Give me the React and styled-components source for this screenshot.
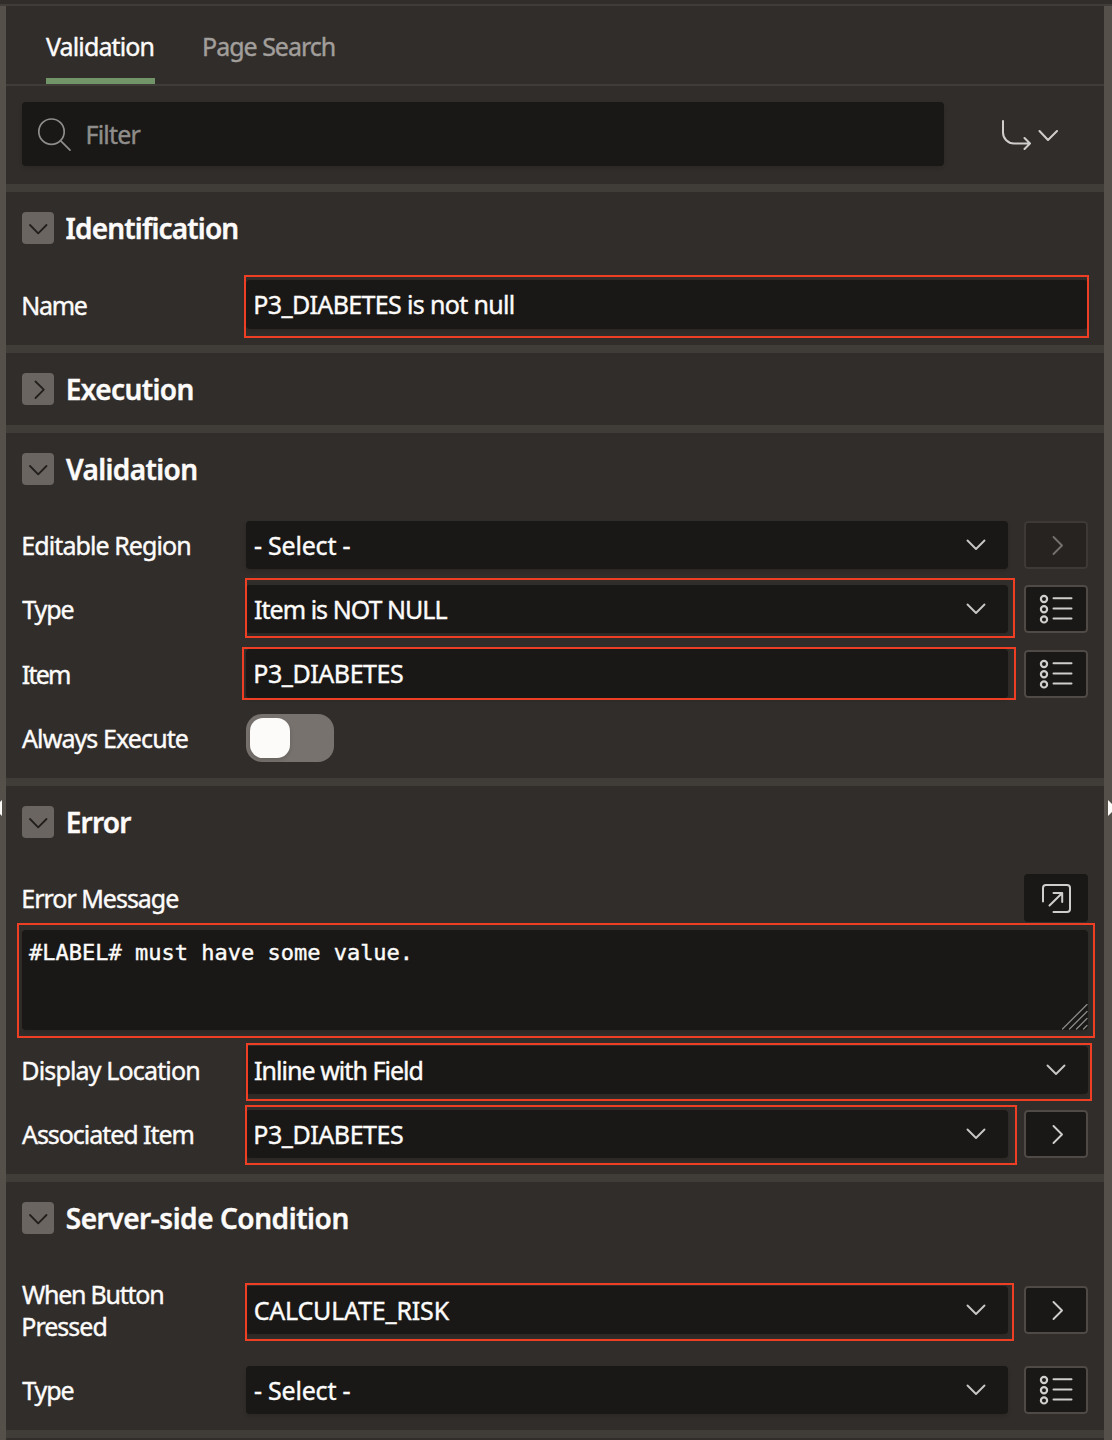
import React from 'react';
import styled, { createGlobalStyle } from 'styled-components';

const Global = createGlobalStyle`
  *, *::before, *::after { box-sizing: border-box; }
  body { margin: 0; background: #312d2a; }
`;

const SANS = '"Noto Sans", "Open Sans", sans-serif';
const RED = '#ee3f24';

/* ---------- frame ---------- */
const Shell = styled.div`
  height: 1440px;
  overflow: hidden;
  display: flex;
  flex-direction: column;
  background: #312d2a;
  color: #fcfbfa;
  font: 400 25px/32px ${SANS};
  font-variant-ligatures: none;
  -webkit-text-stroke: 0.4px currentColor;
`;
const TopEdge = styled.div`
  flex: none;
  height: 6px;
  border-bottom: 2px solid #403c38;
`;
const Columns = styled.div`
  flex: 1;
  display: flex;
  min-height: 0;
`;
const Splitter = styled.div`
  flex: none;
  position: relative;
  width: ${(p) => p.$width}px;
  background: #56504b;
`;
const LeftHandle = styled.i`
  position: absolute;
  top: 794px;
  left: -6px;
  border: solid transparent;
  border-width: 8px 8px 8px 0;
  border-right-color: #fcfbfa;
`;
const RightHandle = styled.i`
  position: absolute;
  top: 794px;
  left: 4px;
  border: solid transparent;
  border-width: 8px 0 8px 8px;
  border-left-color: #fcfbfa;
`;
const Panel = styled.main`
  flex: 1;
  min-width: 0;
  display: flex;
  flex-direction: column;
`;

/* ---------- text ---------- */
const Txt = styled.span`
  display: block;
  white-space: nowrap;
  letter-spacing: ${(p) => p.$track || 0}px;
  margin-left: ${(p) => p.$shift || 0}px;
`;

/* ---------- tabs and filter ---------- */
const Tabs = styled.nav`
  flex: none;
  display: flex;
  gap: 47px;
  height: 80px;
  padding-left: 40px;
  border-bottom: 2px solid #403c38;
`;
const Tab = styled.div`
  height: 78px;
  padding-top: 24px;
  width: ${(p) => p.$width}px;
  color: ${(p) => (p.$active ? '#fcfbfa' : '#a19e9b')};
  border-bottom: 6px solid ${(p) => (p.$active ? '#719468' : 'transparent')};
`;
const FilterBar = styled.div`
  flex: none;
  display: flex;
  height: 98px;
  padding: 16px 16px 18px;
`;
const FilterBox = styled.div`
  width: 922px;
  display: flex;
  align-items: center;
  gap: 14px;
  padding: 0 0 0 14px;
  border-radius: 4px;
  background: #191816;
  color: #8f8d8b;
  box-shadow: 0 2px 4px rgba(0, 0, 0, 0.12);
`;
const GoTo = styled.div`
  flex: 1;
  display: flex;
  justify-content: center;
  align-items: center;
  padding-left: 28px;
  color: #d0cecc;
`;

/* ---------- sections ---------- */
const Section = styled.section`
  flex: none;
  border-top: 8px solid #403c37;
`;
const Head = styled.header`
  display: flex;
  align-items: center;
  gap: 12px;
  height: 72px;
  padding: 0 16px;
`;
const Fold = styled.span`
  flex: none;
  display: flex;
  width: 32px;
  height: 32px;
  border-radius: 4px;
  background: #6a6561;
  color: #211e1c;
`;
const Title = styled.h2`
  margin: 0;
  font: 600 28px/32px ${SANS};
`;
const Body = styled.div`
  padding: 8px 16px;
`;
const Row = styled.div`
  display: flex;
  align-items: center;
  height: ${(p) => p.$h || 64}px;
`;
const Label = styled.div`
  flex: none;
  width: 224px;
`;
const Field = styled.div`
  position: relative;
  flex: 1;
  display: flex;
  align-items: center;
  justify-content: space-between;
  height: ${(p) => p.$h || 48}px;
  padding: 0 19px ${(p) => (p.$h ? 1 : 0)}px 8px;
  border-radius: 4px;
  background: #191816;
  box-shadow: 0 2px 4px rgba(0, 0, 0, 0.14);
`;
const Mark = styled.span`
  position: absolute;
  z-index: 1;
  top: ${(p) => p.$at[0]}px;
  right: ${(p) => p.$at[1]}px;
  bottom: ${(p) => p.$at[2]}px;
  left: ${(p) => p.$at[3]}px;
  border: 2px solid ${RED};
  pointer-events: none;
`;
const IconButton = styled.span`
  flex: none;
  display: flex;
  width: 64px;
  height: 48px;
  margin-left: ${(p) => (p.$push ? 'auto' : '16px')};
  margin-top: ${(p) => p.$drop || 0}px;
  border-radius: 4px;
  background: ${(p) => (p.$dim ? '#272320' : '#191816')};
  color: ${(p) => (p.$dim ? '#75716e' : '#d0cecc')};
  box-shadow: ${(p) =>
    p.$plain ? 'none' : `inset 0 0 0 2px ${p.$dim ? '#3e3936' : '#504a46'}`};
`;
const Toggle = styled.span`
  display: flex;
  width: 88px;
  height: 48px;
  padding: 4px;
  border-radius: 16px;
  background: #77726e;
`;
const Knob = styled.span`
  width: 40px;
  height: 40px;
  border-radius: 13px;
  background: #fcfbfa;
  box-shadow: 0 2px 4px rgba(0, 0, 0, 0.15);
`;
const MessageHead = styled.div`
  display: flex;
  align-items: center;
  height: 56px;
  padding-top: 8px;
`;
const Area = styled.div`
  position: relative;
  height: 100px;
  margin: 8px 0;
  padding: 7px 7px 0;
  border-radius: 4px;
  background: #191816;
  font: 22px/32px "DejaVu Sans Mono", monospace;
  box-shadow: 0 2px 4px rgba(0, 0, 0, 0.14);
`;
const GripCorner = styled.span`
  position: absolute;
  right: 0;
  bottom: 0;
  display: flex;
`;

/* ---------- icons ---------- */
const Svg = ({ w, h, sw = 2, children }) => (
  <svg width={w} height={h} viewBox={`0 0 ${w} ${h}`} fill="none" stroke="currentColor"
    strokeWidth={sw} strokeLinecap="round" strokeLinejoin="round">
    {children}
  </svg>
);
const FoldIcon = ({ open }) => (
  <Svg w={32} h={32} sw={1.8}>
    <path d={open ? 'M8 13l8.200 8.300L24.500 13' : 'M13.500 8.500l8.300 8.200-8.300 8.300'} />
  </Svg>
);
const Caret = styled(({ className }) => (
  <span className={className}>
    <Svg w={26} h={20} sw={1.9}><path d="M4.500 5.500l8.500 8.500L21.500 5.500" /></Svg>
  </span>
))`
  display: flex;
  color: #c9c7c5;
`;
const NextIcon = () => (
  <Svg w={64} h={48} sw={1.9}><path d="M29.500 16l8.500 8.500-8.500 8.500" /></Svg>
);
const ListIcon = () => (
  <Svg w={64} h={48} sw={2}>
    {[14, 24.2, 34.4].map((y) => (
      <g key={y}>
        <circle cx="20" cy={y} r="3.100" strokeWidth="2.200" />
        <path d={`M29.500 ${y - 0.8}h18`} />
      </g>
    ))}
  </Svg>
);
const PopupIcon = () => (
  <Svg w={64} h={48} sw={2}>
    <path d="M19 27.500V14a3 3 0 0 1 3-3h21a3 3 0 0 1 3 3v21a3 3 0 0 1-3 3H29.500M25.500 31.500L38 19.200M29.500 19H38.200V28" />
  </Svg>
);
const SearchIcon = () => (
  <Svg w={36} h={36} sw={1.7}>
    <circle cx="15.500" cy="15.700" r="12.700" />
    <path d="M24.500 24.700l9.500 9.500" />
  </Svg>
);
const GoToIcon = () => (
  <Svg w={62} h={34}>
    <path d="M4 4v11.500a11 11 0 0 0 11 11h16M25.500 21l5.500 5.500-5.500 5.500M40.500 14l8.500 9L58 14" />
  </Svg>
);
const Grip = () => (
  <Svg w={26} h={26} sw={1.3}>
    <path d="M.5 25l24.500-24.500M7.500 25L25 7.500M14.500 25L25 14.500M21.500 25l3.500-3.500" stroke="#8b8987" />
  </Svg>
);

/* ---------- rows ---------- */
const Select = ({ children, mark }) => (
  <Field>
    {children}
    <Caret />
    {mark && <Mark $at={mark} />}
  </Field>
);
const Group = ({ title, track, shift, open = true, children }) => (
  <Section>
    <Head>
      <Fold><FoldIcon open={open} /></Fold>
      <Title><Txt $track={track} $shift={shift}>{title}</Txt></Title>
    </Head>
    {children && <Body>{children}</Body>}
  </Section>
);

export default function App() {
  return (
    <Shell>
      <Global />
      <TopEdge />
      <Columns>
        <Splitter $width={6}><LeftHandle /></Splitter>
        <Panel>
          <Tabs>
            <Tab $active $width={109}><Txt $track={-0.88}>Validation</Txt></Tab>
            <Tab $width={134}><Txt $track={-1} $shift={0}>Page Search</Txt></Tab>
          </Tabs>
          <FilterBar>
            <FilterBox>
              <SearchIcon />
              <Txt $track={-0.8} $shift={-0.5}>Filter</Txt>
            </FilterBox>
            <GoTo><GoToIcon /></GoTo>
          </FilterBar>

          <Group title="Identification" track={-0.84} shift={-0.5}>
            <Row $h={65}>
              <Label><Txt $track={-1.3} $shift={-0.7}>Name</Txt></Label>
              <Field $h={49}>
                <Txt $track={-0.65} $shift={-0.7}>P3_DIABETES is not null</Txt>
                <Mark $at={[-5, -1, -9, -2]} />
              </Field>
            </Row>
          </Group>

          <Group title="Execution" track={-0.6} shift={-0.3} open={false} />

          <Group title="Validation" track={-0.63} shift={0}>
            <Row>
              <Label><Txt $track={-0.92} $shift={-0.7}>Editable Region</Txt></Label>
              <Select><Txt $track={-0.22}>- Select -</Txt></Select>
              <IconButton $dim><NextIcon /></IconButton>
            </Row>
            <Row>
              <Label><Txt $track={-1.1} $shift={0.3}>Type</Txt></Label>
              <Select mark={[-7, -7, -5, -1]}><Txt $track={-0.97}>Item is NOT NULL</Txt></Select>
              <IconButton><ListIcon /></IconButton>
            </Row>
            <Row $h={65}>
              <Label><Txt $track={-1.8} $shift={-0.2}>Item</Txt></Label>
              <Field $h={49}>
                <Txt $track={-0.45} $shift={-0.7}>P3_DIABETES</Txt>
                <Mark $at={[-2, -8, -2, -4]} />
              </Field>
              <IconButton $drop={1}><ListIcon /></IconButton>
            </Row>
            <Row>
              <Label><Txt $track={-0.9}>Always Execute</Txt></Label>
              <Toggle><Knob /></Toggle>
            </Row>
          </Group>

          <Group title="Error" track={-0.79} shift={-0.3}>
            <MessageHead>
              <Label><Txt $track={-1.02} $shift={-0.7}>Error Message</Txt></Label>
              <IconButton $plain $push><PopupIcon /></IconButton>
            </MessageHead>
            <Area>
              #LABEL# must have some value.
              <GripCorner><Grip /></GripCorner>
              <Mark $at={[-7, -7, -8, -5]} />
            </Area>
            <Row>
              <Label><Txt $track={-0.85} $shift={-0.7}>Display Location</Txt></Label>
              <Select mark={[-3, -4, -7, 0]}><Txt $track={-0.96}>Inline with Field</Txt></Select>
            </Row>
            <Row>
              <Label><Txt $track={-1.05}>Associated Item</Txt></Label>
              <Select mark={[-5, -9, -7, -1]}><Txt $track={-0.45} $shift={-0.7}>P3_DIABETES</Txt></Select>
              <IconButton><NextIcon /></IconButton>
            </Row>
          </Group>

          <Group title="Server-side Condition" track={-0.45} shift={-0.3}>
            <Row $h={96}>
              <Label>
                <Txt $track={-1.25}>When Button</Txt>
                <Txt $track={-1} $shift={-0.7}>Pressed</Txt>
              </Label>
              <Select mark={[-3, -6, -7, -1]}><Txt $track={-0.19} $shift={-0.3}>CALCULATE_RISK</Txt></Select>
              <IconButton><NextIcon /></IconButton>
            </Row>
            <Row>
              <Label><Txt $track={-1.1} $shift={0.3}>Type</Txt></Label>
              <Select><Txt $track={-0.22}>- Select -</Txt></Select>
              <IconButton><ListIcon /></IconButton>
            </Row>
          </Group>
          <Section />
        </Panel>
        <Splitter $width={8}><RightHandle /></Splitter>
      </Columns>
    </Shell>
  );
}
